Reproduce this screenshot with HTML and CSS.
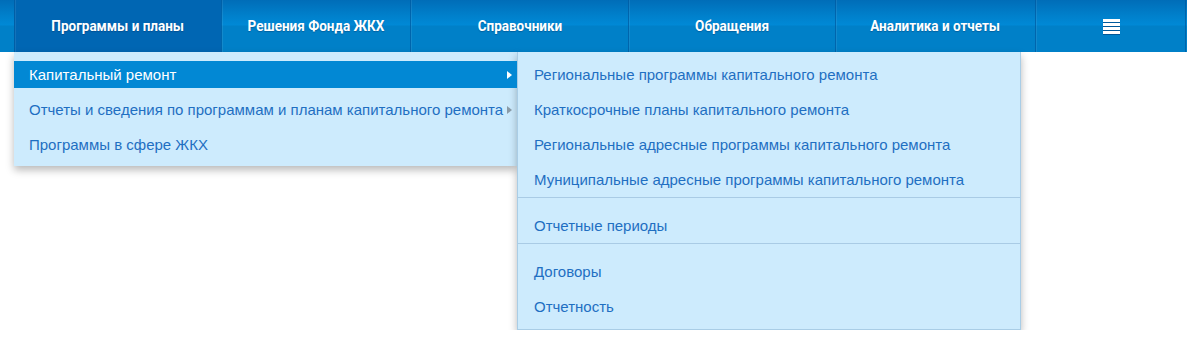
FILE: index.html
```html
<!DOCTYPE html>
<html lang="ru">
<head>
<meta charset="utf-8">
<title>Меню</title>
<link rel="stylesheet" href="styles.css">
</head>
<body>
<header class="topbar">
  <nav class="nav">
    <div class="nav-lead"></div>
    <a class="nav-item nav-item--active w1" href="#"><span class="nav-text">Программы и планы</span></a>
    <a class="nav-item w2" href="#"><span class="nav-text">Решения Фонда ЖКХ</span></a>
    <a class="nav-item w3" href="#"><span class="nav-text">Справочники</span></a>
    <a class="nav-item w4" href="#"><span class="nav-text">Обращения</span></a>
    <a class="nav-item w5" href="#"><span class="nav-text">Аналитика и отчеты</span></a>
    <a class="nav-item w6" href="#" aria-label="Меню">
      <span class="burger"><span></span><span></span><span></span><span></span></span>
    </a>
    <div class="nav-tail"></div>
  </nav>

  <div class="dropdowns">
    <ul class="dd dd-main">
      <li class="dd-row"><a class="dd-link dd-link-active" href="#">Капитальный ремонт<span class="tri tri-white"></span></a></li>
      <li class="dd-row"><a class="dd-link" href="#">Отчеты и сведения по программам и планам капитального ремонта<span class="tri tri-grey"></span></a></li>
      <li class="dd-row"><a class="dd-link" href="#">Программы в сфере ЖКХ</a></li>
    </ul>

    <ul class="dd dd-sub">
      <li class="dd-row"><a class="dd-link" href="#">Региональные программы капитального ремонта</a></li>
      <li class="dd-row"><a class="dd-link" href="#">Краткосрочные планы капитального ремонта</a></li>
      <li class="dd-row"><a class="dd-link" href="#">Региональные адресные программы капитального ремонта</a></li>
      <li class="dd-row"><a class="dd-link" href="#">Муниципальные адресные программы капитального ремонта</a></li>
      <li class="dd-sep"></li>
      <li class="dd-row"><a class="dd-link" href="#">Отчетные периоды</a></li>
      <li class="dd-sep"></li>
      <li class="dd-row"><a class="dd-link" href="#">Договоры</a></li>
      <li class="dd-row"><a class="dd-link" href="#">Отчетность</a></li>
    </ul>
  </div>
</header>
</body>
</html>
```

FILE: styles.css
```css
html, body {
  margin: 0;
  padding: 0;
  background: #ffffff;
}

body {
  font-family: "Liberation Sans", Arial, sans-serif;
}

.nav {
  display: flex;
  height: 52px;
  background: linear-gradient(#006db8 0%, #0080cb 30%, #0089d6 48%, #0080c8 50%, #0080c8 100%);
}

.nav-lead {
  width: 14px;
  flex: none;
}

.nav-tail {
  flex: 1;
  border-left: 1px solid rgba(0, 90, 160, 0.7);
}

.nav-item {
  flex: none;
  display: flex;
  align-items: center;
  justify-content: center;
  color: #ffffff;
  text-decoration: none;
  border-left: 1px solid rgba(0, 90, 160, 0.7);
  box-shadow: inset 1px 0 0 rgba(255, 255, 255, 0.08);
  box-sizing: border-box;
}

.nav-text {
  display: inline-block;
  font-family: "Roboto", "Liberation Sans", sans-serif;
  font-weight: bold;
  font-size: 15px;
  white-space: nowrap;
  transform: scaleX(0.9);
  text-shadow: 0 1px 1px rgba(0, 40, 90, 0.35);
}

.nav-item--active {
  background: #0066b3;
  border-left-color: #005ea6;
}

.w1 { width: 207px; }
.w2 { width: 189px; }
.w3 { width: 218px; }
.w4 { width: 207px; }
.w5 { width: 200px; }
.w6 { width: 150px; }

.burger {
  display: flex;
  flex-direction: column;
  gap: 1px;
  width: 17px;
  margin-left: 1px;
}

.burger span {
  display: block;
  height: 3px;
  background: #ffffff;
  box-shadow: 0 1px 0 rgba(0, 60, 120, 0.6);
}

.dropdowns {
  display: flex;
  align-items: flex-start;
  padding-left: 14px;
}

.dd {
  margin: 0;
  list-style: none;
  background: #cdebfd;
  box-shadow: 0 4px 8px rgba(0, 0, 0, 0.28);
  box-sizing: border-box;
  padding: 5px 0 4px;
}

.dd-main {
  width: 503px;
  flex: none;
}

.dd-sub {
  width: 504px;
  flex: none;
  border: 1px solid #a9cde6;
  border-top: none;
  padding-bottom: 5px;
}

.dd-row {
  padding: 4px 0;
}

.dd-link {
  position: relative;
  display: block;
  height: 27px;
  line-height: 27px;
  padding: 0 15px;
  color: #1f6fc2;
  text-decoration: none;
  font-size: 15px;
  white-space: nowrap;
}

.dd-sub .dd-link {
  padding-left: 16px;
}

.dd-link-active {
  background: #0288d4;
  color: #ffffff;
}

.tri {
  position: absolute;
  right: 5px;
  top: 10px;
  width: 0;
  height: 0;
  border-top: 4px solid transparent;
  border-bottom: 4px solid transparent;
  border-left: 5px solid #ffffff;
}

.tri-grey {
  border-left-color: #8a9aa6;
}

.dd-sep {
  height: 1px;
  background: #a9cbe5;
  margin: 0 0 10px;
}
```
